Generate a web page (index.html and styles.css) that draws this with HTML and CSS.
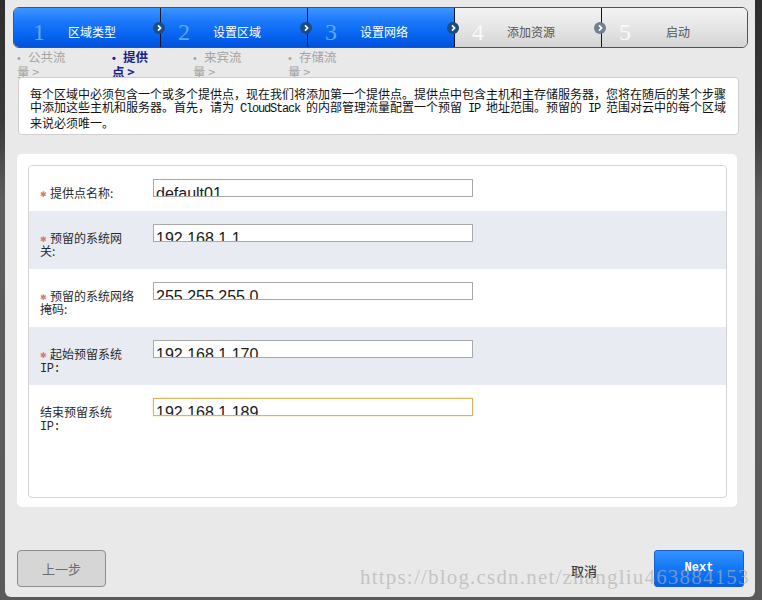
FILE: index.html
```html
<!DOCTYPE html>
<html lang="zh-CN">
<head>
<meta charset="utf-8">
<title>添加区域</title>
<link rel="stylesheet" href="styles.css">
</head>
<body>
<div class="dialog">
  <div class="steps">
    <div class="step on first">
      <span class="num">1</span><span class="lbl">区域类型</span>
      <svg class="chev" viewBox="0 0 12 12"><circle cx="6" cy="6" r="6" class="c-on"/><path d="M5 3.4 L7.6 6 L5 8.6" /></svg>
    </div>
    <div class="step on">
      <span class="num">2</span><span class="lbl">设置区域</span>
      <svg class="chev" viewBox="0 0 12 12"><circle cx="6" cy="6" r="6" class="c-on"/><path d="M5 3.4 L7.6 6 L5 8.6" /></svg>
    </div>
    <div class="step on">
      <span class="num">3</span><span class="lbl">设置网络</span>
      <svg class="chev" viewBox="0 0 12 12"><circle cx="6" cy="6" r="6" class="c-on"/><path d="M5 3.4 L7.6 6 L5 8.6" /></svg>
    </div>
    <div class="step off">
      <span class="num">4</span><span class="lbl">添加资源</span>
      <svg class="chev" viewBox="0 0 12 12"><circle cx="6" cy="6" r="6" class="c-off"/><path d="M5 3.4 L7.6 6 L5 8.6" /></svg>
    </div>
    <div class="step off last">
      <span class="num">5</span><span class="lbl">启动</span>
    </div>
  </div>

  <div class="substeps">
    <div class="sub"><span class="dot">•</span>公共流量 &gt;</div>
    <div class="sub active"><span class="dot">•</span>提供点 &gt;</div>
    <div class="sub"><span class="dot">•</span>来宾流量 &gt;</div>
    <div class="sub"><span class="dot">•</span>存储流量 &gt;</div>
  </div>

  <div class="info">每个区域中必须包含一个或多个提供点，现在我们将添加第一个提供点。提供点中包含主机和主存储服务器，您将在随后的某个步骤中添加这些主机和服务器。首先，请为<span class="lat"> CloudStack </span>的内部管理流量配置一个预留<span class="lat"> IP </span>地址范围。预留的<span class="lat"> IP </span>范围对云中的每个区域来说必须唯一。</div>

  <div class="panel">
    <div class="form">
      <div class="row">
        <div class="label"><span class="req">✱</span>提供点名称:</div>
        <div class="field">default01</div>
      </div>
      <div class="row alt">
        <div class="label"><span class="req">✱</span>预留的系统网<br>关:</div>
        <div class="field">192.168.1.1</div>
      </div>
      <div class="row">
        <div class="label"><span class="req">✱</span>预留的系统网络<br>掩码:</div>
        <div class="field">255.255.255.0</div>
      </div>
      <div class="row alt">
        <div class="label"><span class="req">✱</span>起始预留系统<br><span class="ip">IP:</span></div>
        <div class="field">192.168.1.170</div>
      </div>
      <div class="row">
        <div class="label">结束预留系统<br><span class="ip">IP:</span></div>
        <div class="field focus">192.168.1.189</div>
      </div>
    </div>
  </div>

  <div class="footer">
    <div class="btn prev">上一步</div>
    <div class="spacer"></div>
    <div class="cancel">取消</div>
    <div class="btn next">Next</div>
  </div>

  <div class="watermark">https://blog.csdn.net/zhangliu463884153</div>
</div>
</body>
</html>
```

FILE: styles.css
```css
* { box-sizing: border-box; }

html, body {
  margin: 0;
  width: 762px;
  height: 600px;
  overflow: hidden;
}

body {
  background: linear-gradient(#2e2e2e 0, #333 50px, #3a3a3a 120px, #5e5e5e 200px, #5a5a5a 100%);
  font-family: "Noto Sans CJK SC", "Liberation Sans", sans-serif;
  font-size: 12px;
  color: #222;
}

.dialog {
  position: relative;
  margin-left: 5px;
  width: 750px;
  height: 597px;
  background: #e9e9e9;
  border-radius: 0 0 6px 6px;
  padding-top: 7px;
  display: flex;
  flex-direction: column;
}

/* ---------- wizard steps ---------- */
.steps {
  margin-left: 8px;
  width: 735px;
  height: 41px;
  display: flex;
  border: 1px solid #3f5675;
  border-radius: 6px;
  background: #dcdcdc;
}

.step {
  position: relative;
  width: 147px;
  height: 39px;
  display: flex;
  align-items: center;
  padding-top: 9px;
  padding-left: 17px;
  border-left: 1px solid #0c1626;
}
.step.first { width: 146px; border-left: 0; padding-left: 19px; border-radius: 5px 0 0 5px; }
.step.last { width: 146px; border-radius: 0 5px 5px 0; }

.step.on {
  background: linear-gradient(#3d95ff 0%, #1a78fb 35%, #0764f0 70%, #0052dc 100%);
}
.step.off {
  background: linear-gradient(#f3f3f3 0%, #e6e6e6 50%, #d4d4d4 100%);
}

.num {
  width: 21px;
  font-family: "Liberation Serif", serif;
  font-size: 24px;
  line-height: 1;
}
.on .num { color: #5fa8ff; }
.off .num { color: #f9f9f9; }

.lbl {
  width: 76px;
  text-align: center;
  font-size: 12px;
  line-height: 14px;
}
.on .lbl { color: #fff; }
.off .lbl { color: #555; }

.chev {
  position: absolute;
  right: -5px;
  top: 14px;
  width: 12px;
  height: 12px;
  z-index: 2;
}
.chev path { fill: none; stroke: #fff; stroke-width: 1.7; }
.c-on { fill: #1c4c84; }
.c-off { fill: #717f8e; }

/* ---------- sub steps ---------- */
.substeps {
  margin: 2px 0 0 12px;
  height: 27px;
  display: grid;
  grid-template-columns: 95px 81px 95px 95px;
  line-height: 13px;
  font-size: 12.5px;
}
.sub {
  width: 52px;
  color: #a4a4a4;
}
.sub .dot {
  display: inline-block;
  width: 11px;
  font-family: "Liberation Sans", sans-serif;
  font-size: 11px;
}
.sub.active {
  width: 46px;
  color: #18208a;
  font-weight: bold;
}

/* ---------- info ---------- */
.info {
  margin-left: 13px;
  width: 721px;
  height: 58px;
  background: #fff;
  border: 1px solid #cfcfcf;
  border-radius: 4px;
  padding: 9px 10px 0 11px;
  font-size: 12px;
  line-height: 13px;
  color: #111;
}
.lat {
  font-family: "Liberation Mono", monospace;
  letter-spacing: -1.2px;
}

/* ---------- form panel ---------- */
.panel {
  margin: 19px 0 0 12px;
  width: 720px;
  height: 353px;
  background: #fff;
  border-radius: 5px;
  padding: 11px 0 0 11px;
}
.form {
  width: 699px;
  height: 333px;
  border: 1px solid #d4d4d4;
  border-radius: 4px;
  overflow: hidden;
}
.row {
  display: grid;
  grid-template-columns: 113px 320px;
  align-items: start;
  height: 58px;
  padding-left: 11px;
  background: #fff;
}
.row:first-child { height: 45px; }
.row.alt { background: #e9ebf2; }

.label {
  padding-top: 21px;
  font-size: 12px;
  line-height: 12.5px;
  color: #2a2a2a;
}
.label span { line-height: 0; }
.ip {
  font-family: "Liberation Mono", monospace;
  font-size: 12px;
  letter-spacing: -0.5px;
}
.req {
  display: inline-block;
  width: 10px;
  font-family: "DejaVu Sans", sans-serif;
  font-size: 8px;
  color: #d07a7a;
  vertical-align: 1px;
}

.field {
  margin-top: 13px;
  width: 320px;
  height: 18px;
  border: 1px solid #a9a9a9;
  background: #fff;
  overflow: hidden;
  padding: 6px 0 0 2px;
  font-family: "Liberation Sans", Arial, sans-serif;
  font-size: 16px;
  line-height: 16px;
  color: #1a1a1a;
}
.field.focus {
  border-color: #d9b25e;
  box-shadow: 0 0 2px #f0d9a0;
}

/* ---------- footer ---------- */
.footer {
  margin: 43px 11px 0 12px;
  height: 37px;
  display: flex;
  align-items: center;
}
.spacer { flex: 1; }
.btn {
  height: 37px;
  display: flex;
  align-items: center;
  justify-content: center;
}
.prev {
  width: 89px;
  background: #d6d6d6;
  border: 1px solid #8d8d8d;
  border-radius: 4px;
  color: #6c6c6c;
  font-size: 13px;
}
.cancel {
  margin-right: 57px;
  padding-top: 4px;
  color: #3c3c3c;
  font-size: 13px;
  font-weight: 500;
}
.next {
  width: 90px;
  background: linear-gradient(#3592ff 0%, #147af8 45%, #0062ea 100%);
  border: 1px solid #1b5fc4;
  border-radius: 3px;
  color: #fff;
  font-family: "Liberation Mono", monospace;
  font-weight: bold;
  font-size: 12px;
  padding-bottom: 1px;
}

/* ---------- watermark overlay ---------- */
.watermark {
  position: absolute;
  left: 355px;
  top: 565px;
  font-family: "Liberation Serif", serif;
  font-size: 21px;
  letter-spacing: 1.2px;
  color: rgba(175, 175, 175, 0.65);
  white-space: nowrap;
  pointer-events: none;
}
```
